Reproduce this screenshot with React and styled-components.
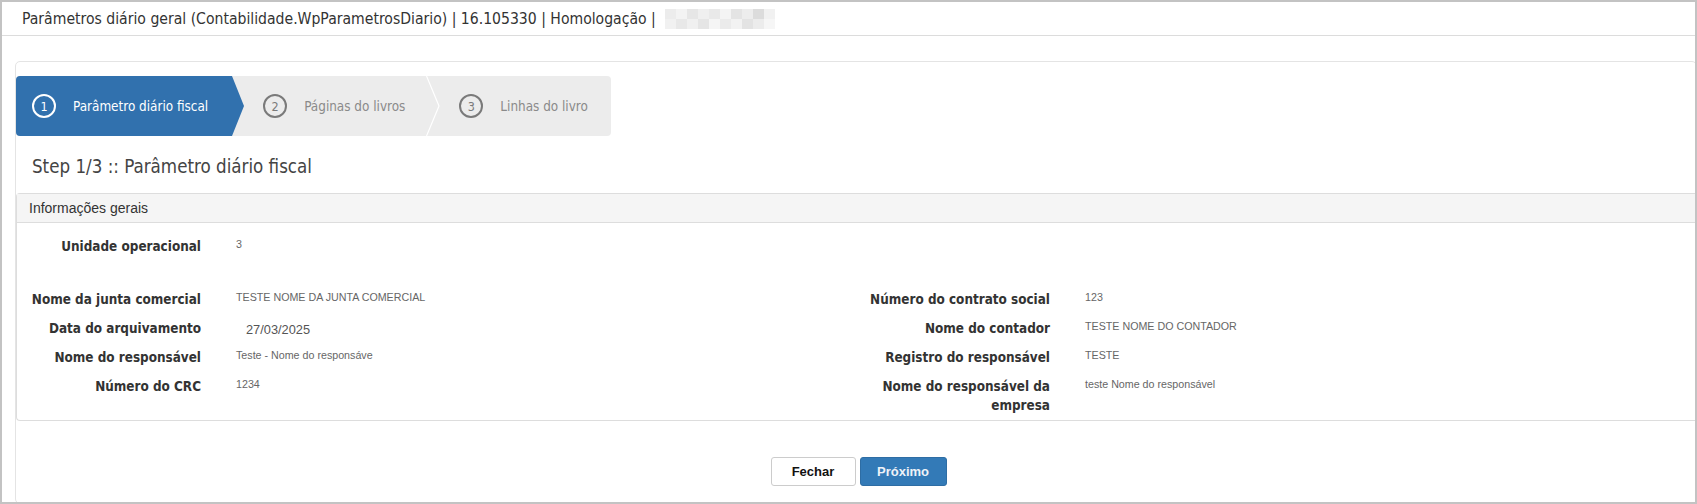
import React from "react";
import styled, { createGlobalStyle } from "styled-components";

const Global = createGlobalStyle`
  html, body { margin: 0; padding: 0; background: #fff; }
  * { box-sizing: border-box; }
`;

const Frame = styled.div`
  width: 1697px;
  height: 504px;
  border: 2px solid #c3c3c3;
  background: #fff;
  overflow: hidden;
  display: flex;
  flex-direction: column;
`;

const Header = styled.div`
  height: 34px;
  flex: none;
  display: flex;
  align-items: center;
  gap: 9px;
  padding-left: 20px;
  border-bottom: 1px solid #dcdcdc;
  font-family: "DejaVu Sans Condensed", "DejaVu Sans", sans-serif;
  font-size: 15.6px;
  color: #333;
`;

const Blur = styled.div`
  display: grid;
  grid-template-columns: repeat(10, 11px);
  grid-template-rows: repeat(2, 10px);
  width: 110px;
  height: 20px;
`;

const BlurCell = styled.div`
  background: ${(p) => p.$c};
`;

const Card = styled.div`
  flex: 1;
  margin: 25px 0 -2px 13px;
  width: 1682px;
  border: 1px solid #e4e4e4;
  border-radius: 5px;
  display: flex;
  flex-direction: column;
`;

const StepBar = styled.div`
  margin-top: 14px;
  width: 595px;
  height: 60px;
  background: #ececec;
  border-radius: 4px;
  display: flex;
  align-items: stretch;
`;

const Step = styled.div`
  position: relative;
  display: flex;
  align-items: center;
  gap: 17px;
  padding: 0 ${(p) => p.$pr}px 0 ${(p) => p.$pl}px;
  background: ${(p) => (p.$active ? "#3171ae" : "transparent")};
  border-radius: ${(p) => (p.$active ? "4px 0 0 4px" : "0")};
  color: ${(p) => (p.$active ? "#fff" : "#8a8a8a")};
  font-family: "DejaVu Sans Condensed", "DejaVu Sans", sans-serif;
  font-size: 13.4px;
  ${(p) =>
    p.$active &&
    `&::after {
      content: "";
      position: absolute;
      top: 0;
      right: -12px;
      width: 0;
      height: 0;
      border-top: 30px solid transparent;
      border-bottom: 30px solid transparent;
      border-left: 12px solid #3171ae;
    }`}
`;

const StepNum = styled.span`
  width: 24px;
  height: 24px;
  flex: none;
  border-radius: 50%;
  border: 2px solid ${(p) => (p.$active ? "#fff" : "#7a7a7a")};
  color: ${(p) => (p.$active ? "#fff" : "#7a7a7a")};
  display: flex;
  align-items: center;
  justify-content: center;
  font-size: 12.5px;
`;

const Separator = styled.svg`
  flex: none;
  width: 14px;
  height: 60px;
`;

const StepTitle = styled.div`
  margin: 20px 0 15px 16px;
  line-height: 22px;
  font-family: "DejaVu Sans Condensed", "DejaVu Sans", sans-serif;
  font-size: 18.6px;
  color: #444;
`;

const Panel = styled.div`
  border: 1px solid #dddddd;
  border-right: none;
  border-radius: 4px 0 0 4px;
`;

const PanelHeading = styled.div`
  height: 29px;
  display: flex;
  align-items: center;
  padding-left: 12px;
  background: #f5f5f5;
  border-bottom: 1px solid #dddddd;
  font-family: "Liberation Sans", Arial, sans-serif;
  font-size: 14px;
  color: #333;
`;

const PanelBody = styled.div`
  padding: 14px 0 5px;
  display: grid;
  grid-template-columns: 849px 1fr;
  row-gap: 10px;
`;

const Field = styled.div`
  display: grid;
  grid-template-columns: 182px 1fr;
  column-gap: 35px;
  padding-left: 2px;
  align-items: start;
  margin-bottom: ${(p) => (p.$extra ? "24px" : "0")};
`;

const Label = styled.div`
  text-align: right;
  font-family: "DejaVu Sans Condensed", "DejaVu Sans", sans-serif;
  font-weight: bold;
  font-size: 13.4px;
  line-height: 19px;
  color: #333;
`;

const Value = styled.div`
  font-family: "Liberation Sans", Arial, sans-serif;
  font-size: 10.7px;
  line-height: 15px;
  color: #666;
`;

const DateValue = styled.div`
  padding: 3px 0 0 10px;
  font-family: "Liberation Sans", Arial, sans-serif;
  font-size: 12.8px;
  line-height: 15px;
  color: #555;
`;

const Footer = styled.div`
  display: flex;
  justify-content: center;
  gap: 4px;
  padding: 36px 0 0 5px;
`;

const Button = styled.button`
  width: ${(p) => p.$w}px;
  height: 29px;
  border-radius: 3px;
  border: 1px solid ${(p) => (p.$primary ? "#2e6da4" : "#cccccc")};
  background: ${(p) => (p.$primary ? "#337ab7" : "#fff")};
  color: ${(p) => (p.$primary ? "#eef2f8" : "#111")};
  font-family: "Liberation Sans", Arial, sans-serif;
  font-weight: bold;
  font-size: 13px;
  padding: 0;
  cursor: pointer;
`;

const blurColors = [
  "#ececec", "#f3f3f3", "#e6e6e6", "#efefef", "#e9e9e9", "#f4f4f4", "#e4e4e4", "#ededed", "#dcdcdc", "#f1f1f1",
  "#f1f1f1", "#e8e8e8", "#f0f0f0", "#e5e5e5", "#f5f5f5", "#ebebeb", "#f2f2f2", "#e3e3e3", "#ececec", "#f6f6f6",
];

const rows = [
  [
    { label: "Nome da junta comercial", value: "TESTE NOME DA JUNTA COMERCIAL" },
    { label: "Número do contrato social", value: "123" },
  ],
  [
    { label: "Data do arquivamento", value: "27/03/2025", date: true },
    { label: "Nome do contador", value: "TESTE NOME DO CONTADOR" },
  ],
  [
    { label: "Nome do responsável", value: "Teste - Nome do responsáve" },
    { label: "Registro do responsável", value: "TESTE" },
  ],
  [
    { label: "Número do CRC", value: "1234" },
    { label: "Nome do responsável da empresa", value: "teste Nome do responsável" },
  ],
];

function FieldItem({ f }) {
  return (
    <Field>
      <Label>{f.label}</Label>
      {f.date ? <DateValue>{f.value}</DateValue> : <Value>{f.value}</Value>}
    </Field>
  );
}

export default function App() {
  return (
    <>
      <Global />
      <Frame>
        <Header>
          <span>Parâmetros diário geral (Contabilidade.WpParametrosDiario) | 16.105330 | Homologação |</span>
          <Blur>
            {blurColors.map((c, i) => (
              <BlurCell key={i} $c={c} />
            ))}
          </Blur>
        </Header>
        <Card>
          <StepBar>
            <Step $active $pl={16} $pr={24}>
              <StepNum $active>1</StepNum>
              <span>Parâmetro diário fiscal</span>
            </Step>
            <Step $pl={31} $pr={21}>
              <StepNum>2</StepNum>
              <span>Páginas do livros</span>
            </Step>
            <Separator viewBox="0 0 14 60">
              <polyline points="0.5,0 13,30 0.5,60" fill="none" stroke="#ffffff" strokeWidth="1.2" />
            </Separator>
            <Step $pl={19} $pr={21}>
              <StepNum>3</StepNum>
              <span>Linhas do livro</span>
            </Step>
          </StepBar>
          <StepTitle>Step 1/3 :: Parâmetro diário fiscal</StepTitle>
          <Panel>
            <PanelHeading>Informações gerais</PanelHeading>
            <PanelBody>
              <Field $extra>
                <Label>Unidade operacional</Label>
                <Value>3</Value>
              </Field>
              <div />
              {rows.map((r, i) => (
                <React.Fragment key={i}>
                  <FieldItem f={r[0]} />
                  <FieldItem f={r[1]} />
                </React.Fragment>
              ))}
            </PanelBody>
          </Panel>
          <Footer>
            <Button $w={85}>Fechar</Button>
            <Button $w={87} $primary>Próximo</Button>
          </Footer>
        </Card>
      </Frame>
    </>
  );
}
